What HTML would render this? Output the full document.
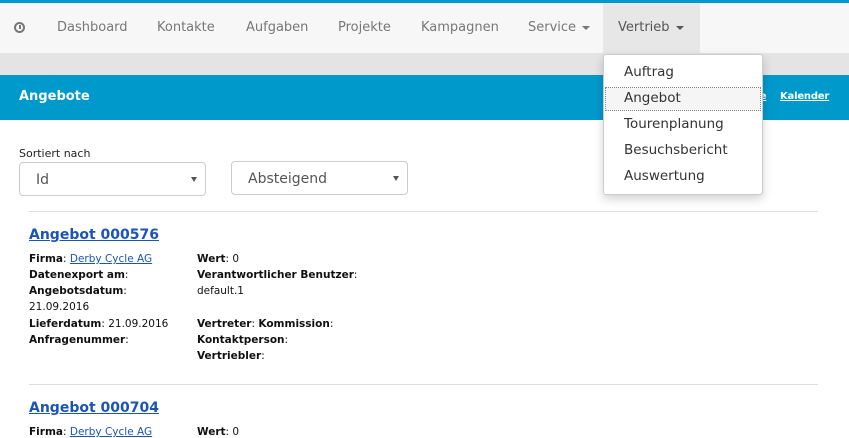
<!DOCTYPE html>
<html><head><meta charset="utf-8"><style>
*{margin:0;padding:0;box-sizing:border-box}
body{width:849px;height:435px;overflow:hidden;background:#fff;font-family:"DejaVu Sans","Liberation Sans",sans-serif;position:relative;color:#222}
.a{position:absolute;white-space:nowrap}
.nav{font-size:13px;color:#777;top:20px}
.dd{font-size:13.5px;color:#333;left:624px}
.s{font-size:10.5px;color:#111}
b{font-weight:bold}
.lnk{color:#1a55b5;text-decoration:underline}
.t{font-size:14px;font-weight:bold;color:#1a55b5;text-decoration:underline;left:29px}
.sel{position:absolute;border:1px solid #ccc;border-radius:4px;height:34px;font-size:14px;color:#555;padding:9px 0 0 16px;background:#fff}
.sel:after{content:"";position:absolute;right:8px;top:14px;border-left:3px solid transparent;border-right:3px solid transparent;border-top:5px solid #555}
.caret{display:inline-block;border-left:4px solid transparent;border-right:4px solid transparent;border-top:4px solid #777;vertical-align:middle;margin-left:6px}
</style></head><body>
<div class="a" style="left:0;top:0;width:849px;height:3px;background:#0099cc"></div>
<div class="a" style="left:0;top:3px;width:849px;height:50px;background:#f7f7f7"></div>
<div class="a" style="left:603px;top:3px;width:97px;height:50px;background:#e7e7e7"></div>
<div class="a" style="left:0;top:53px;width:849px;height:22px;background:#e4e4e4"></div>
<div class="a" style="left:0;top:75px;width:849px;height:45px;background:#0099cc"></div>
<div class="a" style="left:14px;top:22px;width:11px;height:11px;border:2px solid #777;border-radius:50%"></div>
<div class="a" style="left:19px;top:25px;width:1.5px;height:4px;background:#777"></div>
<div class="a nav" style="left:57px">Dashboard</div>
<div class="a nav" style="left:157px">Kontakte</div>
<div class="a nav" style="left:246px">Aufgaben</div>
<div class="a nav" style="left:338px">Projekte</div>
<div class="a nav" style="left:421px">Kampagnen</div>
<div class="a nav" style="left:528px">Service<span class="caret"></span></div>
<div class="a nav" style="left:618px;color:#555">Vertrieb<span class="caret" style="border-top-color:#555"></span></div>
<div class="a" style="left:19px;top:89px;font-size:13px;font-weight:bold;color:#fff">Angebote</div>
<div class="a" style="left:740px;top:91px;font-size:10px;font-weight:bold;color:#fff;text-decoration:underline;letter-spacing:-0.2px">Liste</div>
<div class="a" style="left:780px;top:91px;font-size:10px;font-weight:bold;color:#fff;text-decoration:underline;letter-spacing:-0.2px">Kalender</div>
<div class="a" style="left:603px;top:54px;width:160px;height:141px;background:#fff;border:1px solid #ccc;border-radius:3px;box-shadow:0 4px 10px rgba(0,0,0,.18)"></div>
<div class="a" style="left:605px;top:87px;width:156px;height:24px;background:#f5f5f5;border:1px dotted #888"></div>
<div class="a dd" style="top:64px">Auftrag</div>
<div class="a dd" style="top:90px">Angebot</div>
<div class="a dd" style="top:116px">Tourenplanung</div>
<div class="a dd" style="top:142px">Besuchsbericht</div>
<div class="a dd" style="top:168px">Auswertung</div>
<div class="a" style="left:19px;top:147px;font-size:11px;color:#222">Sortiert nach</div>
<div class="sel" style="left:19px;top:162px;width:187px">Id</div>
<div class="sel" style="left:231px;top:161px;width:177px">Absteigend</div>
<div class="a" style="left:29px;top:211px;width:789px;height:1px;background:#ddd"></div>
<div class="a t" style="top:227px">Angebot 000576</div>
<div class="a s" style="left:29px;top:253px"><b>Firma</b>: <span class="lnk">Derby Cycle AG</span></div>
<div class="a s" style="left:29px;top:269px"><b>Datenexport am</b>:</div>
<div class="a s" style="left:29px;top:285px"><b>Angebotsdatum</b>:</div>
<div class="a s" style="left:29px;top:301px">21.09.2016</div>
<div class="a s" style="left:29px;top:318px"><b>Lieferdatum</b>: 21.09.2016</div>
<div class="a s" style="left:29px;top:334px"><b>Anfragenummer</b>:</div>
<div class="a s" style="left:197px;top:253px"><b>Wert</b>: 0</div>
<div class="a s" style="left:197px;top:269px"><b>Verantwortlicher Benutzer</b>:</div>
<div class="a s" style="left:197px;top:285px">default.1</div>
<div class="a s" style="left:197px;top:318px"><b>Vertreter</b>: <b>Kommission</b>:</div>
<div class="a s" style="left:197px;top:334px"><b>Kontaktperson</b>:</div>
<div class="a s" style="left:197px;top:350px"><b>Vertriebler</b>:</div>
<div class="a" style="left:29px;top:384px;width:789px;height:1px;background:#ddd"></div>
<div class="a t" style="top:400px">Angebot 000704</div>
<div class="a s" style="left:29px;top:426px"><b>Firma</b>: <span class="lnk">Derby Cycle AG</span></div>
<div class="a s" style="left:197px;top:426px"><b>Wert</b>: 0</div>
</body></html>
